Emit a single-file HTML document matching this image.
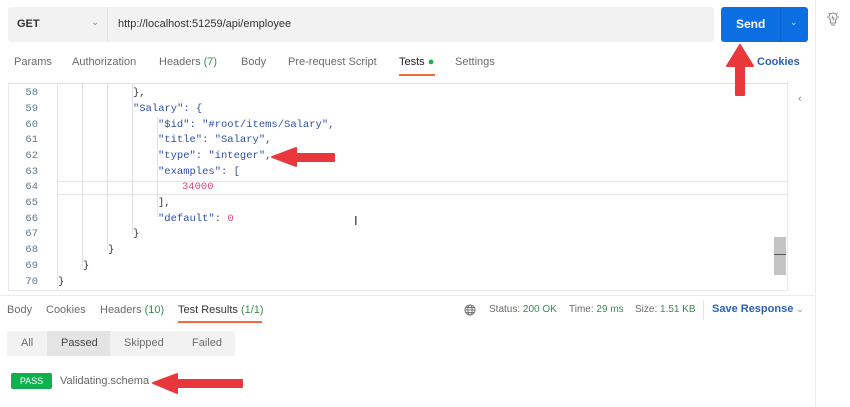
<!DOCTYPE html>
<html><head><style>
*{margin:0;padding:0;box-sizing:border-box}
body{width:850px;height:407px;background:#fff;font-family:"Liberation Sans",sans-serif;font-size:11px;color:#6b6b6b;position:relative;overflow:hidden}
.a{position:absolute;white-space:nowrap}
.code{font-family:"Liberation Mono",monospace;font-size:10.5px;color:#2f4fa8}
.ln{font-family:"Liberation Mono",monospace;font-size:10.5px;color:#5b7a8c;width:30px;text-align:right}
.n{color:#e0457b}
.g{color:#3c8c50}
</style></head><body>
<div class="a" style="left:8px;top:7px;width:706px;height:35px;background:#f2f2f2;border-radius:3px"></div>
<div class="a" style="left:107px;top:7px;width:1px;height:35px;background:#e2e2e2"></div>
<div class="a" style="left:17px;top:18px;color:#333;font-weight:bold;font-size:11px">GET</div>
<div class="a" style="left:91px;top:17px;color:#888;font-size:10px">&#8964;</div>
<div class="a" style="left:118px;top:18px;color:#333;font-size:11px">http://localhost:51259/api/employee</div>
<div class="a" style="left:721px;top:7px;width:87px;height:35px;background:#0b6fe3;border-radius:3px"></div>
<div class="a" style="left:780px;top:7px;width:1px;height:35px;background:#0a62c9"></div>
<div class="a" style="left:736px;top:17px;color:#fff;font-weight:bold;font-size:12px">Send</div>
<div class="a" style="left:790px;top:17px;color:#cfe3ff;font-size:9px">&#8964;</div>
<div class="a" style="left:815px;top:0;width:1px;height:407px;background:#ececec"></div>
<svg class="a" style="left:826px;top:10px" width="14" height="18" viewBox="0 0 14 18" fill="none" stroke="#888" stroke-width="1">
<path d="M7 3a4 4 0 0 0-2.5 7.1V13h5v-2.9A4 4 0 0 0 7 3z"/><path d="M5 15h4M7 5.5l-1 2.5h2l-1 2.5"/><path d="M1 7h1M12 7h1M2.5 3l1 1M11.5 3l-1 1"/></svg>

<div class="a" style="left:14px;top:56px">Params</div>
<div class="a" style="left:72px;top:56px">Authorization</div>
<div class="a" style="left:159px;top:56px">Headers <span class="g">(7)</span></div>
<div class="a" style="left:241px;top:56px">Body</div>
<div class="a" style="left:288px;top:56px">Pre-request Script</div>
<div class="a" style="left:399px;top:56px;color:#222">Tests <span style="color:#1dab52">&#9679;</span></div>
<div class="a" style="left:399px;top:74px;width:36px;height:2px;background:#f26b3a"></div>
<div class="a" style="left:455px;top:56px">Settings</div>
<div class="a" style="left:757px;top:56px;color:#2b5fb8;font-weight:bold">Cookies</div>

<div class="a" style="left:8px;top:83px;width:780px;height:208px;border:1px solid #e8e8e8;border-top:1px solid #e0e0e0"></div>
<div class="a" style="left:57px;top:84px;width:1px;height:206px;background:#e6e6e6"></div>
<div class="a" style="left:82px;top:84px;width:1px;height:182px;background:#e0e0e0"></div>
<div class="a" style="left:107px;top:84px;width:1px;height:166px;background:#e0e0e0"></div>
<div class="a" style="left:132px;top:84px;width:1px;height:150px;background:#e0e0e0"></div>
<div class="a" style="left:157px;top:117px;width:1px;height:100px;background:#e0e0e0"></div>
<div class="a" style="left:58px;top:181px;width:729px;height:14px;border-top:1px solid #e6e6e6;border-bottom:1px solid #e6e6e6"></div>
<div class="a" style="left:774px;top:237px;width:12px;height:38px;background:#c4c4c4"></div>
<div class="a" style="left:774px;top:254px;width:12px;height:1px;background:#555"></div>
<div class="a" style="left:798px;top:93px;color:#888;font-size:11px">&#8249;</div>

<div class="a ln" style="left:8px;top:87px">58</div>
<div class="a ln" style="left:8px;top:103px">59</div>
<div class="a ln" style="left:8px;top:119px">60</div>
<div class="a ln" style="left:8px;top:134px">61</div>
<div class="a ln" style="left:8px;top:150px">62</div>
<div class="a ln" style="left:8px;top:166px">63</div>
<div class="a ln" style="left:8px;top:181px">64</div>
<div class="a ln" style="left:8px;top:197px">65</div>
<div class="a ln" style="left:8px;top:213px">66</div>
<div class="a ln" style="left:8px;top:228px">67</div>
<div class="a ln" style="left:8px;top:244px">68</div>
<div class="a ln" style="left:8px;top:260px">69</div>
<div class="a ln" style="left:8px;top:276px">70</div>

<div class="a code" style="left:133px;top:87px;color:#333">},</div>
<div class="a code" style="left:133px;top:103px">"Salary": {</div>
<div class="a code" style="left:158px;top:119px">"$id": "#root/items/Salary",</div>
<div class="a code" style="left:158px;top:134px">"title": "Salary",</div>
<div class="a code" style="left:158px;top:150px">"type": "integer",</div>
<div class="a code" style="left:158px;top:166px">"examples": [</div>
<div class="a code n" style="left:182px;top:181px">34000</div>
<div class="a code" style="left:158px;top:197px;color:#333">],</div>
<div class="a code" style="left:158px;top:213px">"default": <span class="n">0</span></div>
<div class="a code" style="left:133px;top:228px;color:#333">}</div>
<div class="a code" style="left:108px;top:244px;color:#333">}</div>
<div class="a code" style="left:83px;top:260px;color:#333">}</div>
<div class="a code" style="left:58px;top:276px;color:#333">}</div>
<div class="a" style="left:354px;top:213px;color:#333;font-size:13px">I</div>

<div class="a" style="left:0;top:295px;width:815px;height:1px;background:#ececec"></div>
<div class="a" style="left:7px;top:304px">Body</div>
<div class="a" style="left:46px;top:304px">Cookies</div>
<div class="a" style="left:100px;top:304px">Headers <span class="g">(10)</span></div>
<div class="a" style="left:178px;top:304px;color:#333">Test Results <span class="g">(1/1)</span></div>
<div class="a" style="left:178px;top:321px;width:84px;height:2px;background:#f26b3a"></div>
<svg class="a" style="left:464px;top:304px" width="12" height="12" viewBox="0 0 12 12" fill="none" stroke="#777" stroke-width="1"><circle cx="6" cy="6" r="5"/><ellipse cx="6" cy="6" rx="2.2" ry="5"/><path d="M1 6h10M2 3.5h8M2 8.5h8"/></svg>
<div class="a" style="left:489px;top:304px;font-size:10px">Status: <span class="g">200 OK</span></div>
<div class="a" style="left:569px;top:304px;font-size:10px">Time: <span class="g">29 ms</span></div>
<div class="a" style="left:635px;top:304px;font-size:10px">Size: <span class="g">1.51 KB</span></div>
<div class="a" style="left:703px;top:300px;width:1px;height:20px;background:#e6e6e6"></div>
<div class="a" style="left:712px;top:303px;color:#2b5fb8;font-weight:bold">Save Response <span style="color:#888;font-weight:normal;font-size:9px">&#8964;</span></div>

<div class="a" style="left:7px;top:331px;width:228px;height:25px;background:#f2f2f2;border-radius:2px"></div>
<div class="a" style="left:47px;top:331px;width:63px;height:25px;background:#e4e4e4"></div>
<div class="a" style="left:21px;top:337px">All</div>
<div class="a" style="left:61px;top:337px;color:#444">Passed</div>
<div class="a" style="left:124px;top:337px">Skipped</div>
<div class="a" style="left:192px;top:337px">Failed</div>
<div class="a" style="left:11px;top:373px;width:41px;height:16px;background:#0fb14f;border-radius:2px;color:#fff;font-size:9px;text-align:center;line-height:16px">PASS</div>
<div class="a" style="left:60px;top:375px;color:#666">Validating.schema</div>

<svg class="a" style="left:0;top:0" width="850" height="407">
<g fill="#e8383c" stroke="#e8383c" stroke-linejoin="round">
<polygon points="740,45 727,66 736,66 736,95 744,95 744,66 753,66" stroke-width="2"/>
<polygon points="272,157 296,148 296,154 334,154 334,161 296,161 296,166" stroke-width="2"/>
<polygon points="153,383 177,374 177,380 242,380 242,387 177,387 177,393" stroke-width="2"/>
</g>
</svg>
</body></html>
